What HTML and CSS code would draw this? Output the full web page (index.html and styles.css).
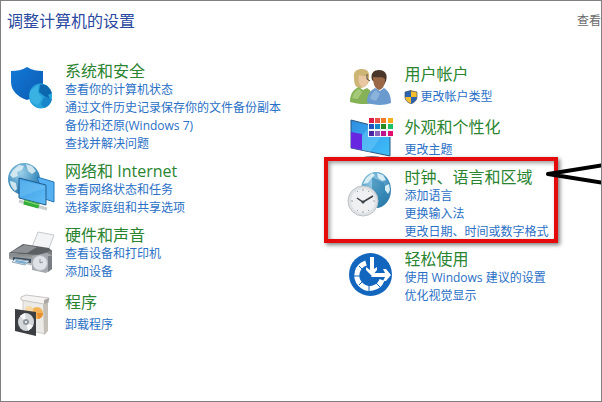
FILE: index.html
```html
<!DOCTYPE html>
<html lang="zh-CN">
<head>
    <meta charset="UTF-8">
    <meta name="viewport" content="width=device-width, initial-scale=1.0">
    <title>控制面板</title>
    <link rel="stylesheet" href="styles.css">
</head>
<body>
    <div class="window">
        <header class="top-bar">
            <h1>调整计算机的设置</h1>
            <span class="view-by">查看</span>
        </header>

        <main class="categories">
            <!-- Left column -->
            <div class="column">
                <section class="category">
                    <svg class="icon" viewBox="0 0 48 44" aria-hidden="true">
                        <defs>
                            <linearGradient id="shieldFill" x1="0" y1="0" x2="1" y2="1">
                                <stop offset="0" stop-color="#1379d6"/>
                                <stop offset="1" stop-color="#0a5bb2"/>
                            </linearGradient>
                        </defs>
                        <path fill="url(#shieldFill)" d="M4 10C10 10 15 9 20 6C25 9 30 10 36 10V21C36 30 29 36 20 39C11 36 4 30 4 21Z"/>
                        <ellipse cx="33.500" cy="35" rx="11.500" ry="12.500" fill="#27a3dc"/>
                        <path fill="#0b67ae" d="M33 24C39 22 43 27 45 32L41 34L43 38L37 35L32 31Z"/>
                        <path fill="#1685c9" d="M37 36L45 38C44 43 41 46 37 47L34 43Z"/>
                        <path fill="#4dc0ea" d="M24 29L31 24L31 32L35 37L31 44C25 43 20 36 24 29Z" opacity=".5"/>
                    </svg>
                    <div class="info">
                        <h2><a href="#">系统和安全</a></h2>
                        <ul>
                            <li><a href="#">查看你的计算机状态</a></li>
                            <li><a href="#">通过文件历史记录保存你的文件备份副本</a></li>
                            <li><a href="#">备份和还原(Windows 7)</a></li>
                            <li><a href="#">查找并解决问题</a></li>
                        </ul>
                    </div>
                </section>

                <section class="category">
                    <svg class="icon" viewBox="0 0 48 44" aria-hidden="true">
                        <defs>
                            <radialGradient id="globeFill" cx=".4" cy=".3" r=".8">
                                <stop offset="0" stop-color="#9dd0ea"/>
                                <stop offset=".6" stop-color="#4795c2"/>
                                <stop offset="1" stop-color="#2c6f9f"/>
                            </radialGradient>
                            <linearGradient id="screenFill" x1="0" y1="0" x2="1" y2="1">
                                <stop offset="0" stop-color="#3c9ee6"/>
                                <stop offset="1" stop-color="#62bcf6"/>
                            </linearGradient>
                        </defs>
                        <circle cx="17" cy="18" r="16" fill="url(#globeFill)"/>
                        <path fill="#dcecf2" d="M6 9L12 4L17 5L15 9L10 11L11 15L6 17L3 14ZM19 3L25 5L29 10L25 13L21 10ZM4 20L9 22L10 28L8 30C5 27 3 24 3 20Z" opacity=".9"/>
                        <path fill="#55b0f2" stroke="#2577b8" d="M30 16L47 21V41L38 38Z"/>
                        <path fill="url(#screenFill)" stroke="#205e91" d="M12 17L39 24V44L12 37Z"/>
                        <path fill="#8bd0fa" d="M13 19L38 25V27L13 36Z" opacity=".3"/>
                        <path stroke="#c9cfcf" stroke-width="3" d="M12 40L40 48"/>
                        <path stroke="#35ad3b" stroke-width="5" d="M17 41L32 45"/>
                        <path stroke="#8ddd80" stroke-width="1" d="M18 40L32 44"/>
                    </svg>
                    <div class="info">
                        <h2><a href="#">网络和 Internet</a></h2>
                        <ul>
                            <li><a href="#">查看网络状态和任务</a></li>
                            <li><a href="#">选择家庭组和共享选项</a></li>
                        </ul>
                    </div>
                </section>

                <section class="category">
                    <svg class="icon" viewBox="0 0 48 44" aria-hidden="true">
                        <defs>
                            <linearGradient id="printerFill" x1="0" y1="0" x2="0" y2="1">
                                <stop offset="0" stop-color="#6e7174"/>
                                <stop offset=".5" stop-color="#999da0"/>
                                <stop offset="1" stop-color="#c3c7ca"/>
                            </linearGradient>
                        </defs>
                        <path fill="#f3f4f5" stroke="#c6c9cc" d="M31 7L47 10L41 26L25 22Z"/>
                        <path fill="#5d6063" d="M16 19L42 23L45 26L32 31L2 28Z"/>
                        <path fill="url(#printerFill)" d="M2 28L32 30L45 25V36L26 41L2 34Z"/>
                        <path fill="#8e9296" d="M4 27L17 20L30 22L20 28Z"/>
                        <path fill="#3d4f60" d="M6 32L24 34V38L6 35Z"/>
                        <path fill="#e4edf4" stroke="#92a8ba" d="M8 34L22 36L18 40L5 37Z"/>
                        <path fill="#77a9cc" d="M9 35L20 37L18 39L8 37Z"/>
                        <path fill="#a3a9ae" d="M25 31L40 28L45 31V44L39 48L25 45Z"/>
                        <path fill="#787e84" d="M41 31L45 31V44L41 47Z"/>
                        <circle cx="33" cy="38" r="7.500" fill="#dfe3e7" stroke="#b4babf"/>
                        <path fill="none" stroke="#8a929a" d="M33 34V38L36 37"/>
                    </svg>
                    <div class="info">
                        <h2><a href="#">硬件和声音</a></h2>
                        <ul>
                            <li><a href="#">查看设备和打印机</a></li>
                            <li><a href="#">添加设备</a></li>
                        </ul>
                    </div>
                </section>

                <section class="category single">
                    <svg class="icon" viewBox="0 0 48 44" aria-hidden="true">
                        <path fill="#eceae6" stroke="#cfccc6" d="M16 10L38 13V45L16 40Z"/>
                        <path fill="#c4bfb7" d="M36 13L41 12V42L37 46Z"/>
                        <path fill="#f5f4f2" stroke="#c8c5c1" d="M14 8L19 6L42 9L41 14L37 15L14 11Z"/>
                        <path fill="#aaa6a2" d="M37 11L42 9L41 14L37 15Z"/>
                        <circle cx="30" cy="24" r="6" fill="#f2b356"/>
                        <circle cx="22" cy="21" r="4" fill="#f6d9a4"/>
                        <path fill="#e98f2d" d="M30 24L36 24A6 6 0 0 1 31 30Z"/>
                        <path fill="#3b3f43" d="M8 20L29 23V47L8 42Z"/>
                        <ellipse cx="19" cy="33" rx="8" ry="9" fill="#d5d8da"/>
                        <path fill="#f8f9fa" d="M19 33L13 27L18 24ZM19 33L26 37L21 42Z"/>
                        <circle cx="19" cy="33" r="3" fill="#8f979d"/>
                        <circle cx="19" cy="33" r="1" fill="#ffffff"/>
                    </svg>
                    <div class="info">
                        <h2><a href="#">程序</a></h2>
                        <ul>
                            <li><a href="#">卸载程序</a></li>
                        </ul>
                    </div>
                </section>
            </div>

            <!-- Right column -->
            <div class="column">
                <section class="category single">
                    <svg class="icon" viewBox="0 0 48 44" aria-hidden="true">
                        <path fill="#cdb576" d="M8 17C7 10 11 8 16 8C22 8 24 12 23 18C23 23 20 26 15 27C10 27 8 24 8 17Z"/>
                        <path fill="#e9c7a3" d="M13 14C17 16 20 15 22 15C23 21 21 25 17 26C13 25 12 20 13 14Z"/>
                        <path fill="#86b257" d="M4 41C4 32 8 28 13 26L17 29L21 27C25 29 27 34 27 42C20 44 11 43 4 41Z"/>
                        <path fill="#b3d287" d="M6 37C8 31 10 29 13 28L16 31L12 38Z" opacity=".7"/>
                        <path fill="#4a352b" d="M26 19C24 12 28 9 33 9C39 9 42 13 40 20L38 24L27 20Z"/>
                        <path fill="#9b6847" d="M27 16C32 17 36 15 39 18C39 24 37 28 33 29C29 28 27 23 27 16Z"/>
                        <path fill="#6b9bce" d="M21 42C21 33 24 30 29 27L34 30L38 27C43 30 45 35 45 42C37 45 28 44 21 42Z"/>
                        <path fill="#9fc1e5" d="M24 38C25 33 27 31 30 29L34 33L30 40Z" opacity=".6"/>
                        <path fill="none" stroke="#4a4640" d="M21 13V18L24 20"/>
                    </svg>
                    <div class="info">
                        <h2><a href="#">用户帐户</a></h2>
                        <ul>
                            <li>
                                <a class="with-shield" href="#"><svg class="uac" viewBox="0 0 14 14" aria-hidden="true">
                                    <path fill="#2b62b0" d="M7 0L1 2V7H7Z"/>
                                    <path fill="#f4bd2c" d="M7 0L13 2V7H7Z"/>
                                    <path fill="#f4bd2c" d="M1 7H7V14C3 12 1 10 1 7Z"/>
                                    <path fill="#2b62b0" d="M7 7H13C13 10 11 12 7 14Z"/>
                                    <path fill="none" stroke="#3c5270" d="M7 1L13 2V7C13 10 11 12 7 14C3 12 1 10 1 7V2Z" opacity=".7"/>
                                </svg>更改帐户类型</a>
                            </li>
                        </ul>
                    </div>
                </section>

                <section class="category single">
                    <svg class="icon" viewBox="0 0 48 44" aria-hidden="true">
                        <defs>
                            <linearGradient id="desktopFill" x1="0" y1="0" x2="1" y2="1">
                                <stop offset="0" stop-color="#2f8de0"/>
                                <stop offset="1" stop-color="#3fc0fb"/>
                            </linearGradient>
                        </defs>
                        <ellipse cx="26" cy="44" rx="9" ry="2" fill="#75797d"/>
                        <path fill="url(#desktopFill)" stroke="#2b567f" d="M5 6L44 16V42L5 34Z"/>
                        <path fill="#7ad2fc" d="M6 34L24 12L40 16L24 38Z" opacity=".4"/>
                        <path fill="#6926e0" d="M5 18L16 20V36L5 34Z"/>
                        <path fill="#ffffff" d="M22 3H48V23H22Z" opacity=".9"/>
                        <path fill="#dd1c45" d="M23 4H28V9H23Z"/>
                        <path fill="#ea5146" d="M29 4H34V9H29Z"/>
                        <path fill="#ee7c25" d="M35 4H40V9H35Z"/>
                        <path fill="#f5ad18" d="M42 4H47V9H42Z"/>
                        <path fill="#1d54bd" d="M23 10H28V15H23Z"/>
                        <path fill="#1687c5" d="M29 10H34V15H29Z"/>
                        <path fill="#278a22" d="M35 10H40V15H35Z"/>
                        <path fill="#1bc064" d="M42 10H47V15H42Z"/>
                        <path fill="#4d279f" d="M23 17H28V22H23Z"/>
                        <path fill="#8d64ba" d="M29 17H34V22H29Z"/>
                        <path fill="#bd148b" d="M35 17H40V22H35Z"/>
                        <path fill="#e30d70" d="M42 17H47V22H42Z"/>
                    </svg>
                    <div class="info">
                        <h2><a href="#">外观和个性化</a></h2>
                        <ul>
                            <li><a href="#">更改主题</a></li>
                        </ul>
                    </div>
                </section>

                <section class="category marked">
                    <svg class="icon" viewBox="0 0 48 44" aria-hidden="true">
                        <ellipse cx="30" cy="23" rx="15" ry="18" fill="url(#globeFill)"/>
                        <path fill="#287fae" d="M26 10L38 16L43 30C40 37 36 40 30 41L26 24Z" opacity=".6"/>
                        <path fill="#d8edf4" d="M20 11L26 6L29 8L25 12L22 16L17 17ZM31 6L37 8L40 13L36 14L32 11ZM39 19L43 17L44 23L42 27L39 23Z"/>
                        <circle cx="17" cy="34" r="15" fill="#dfe2e5" stroke="#bcc1c6"/>
                        <circle cx="17" cy="34" r="12" fill="#eff0f2"/>
                        <path stroke="#a0a5aa" d="M17 22V24M17 44V46M5 34H7M27 34H29M11 24L12 25M23 24L22 25M11 44L12 43M23 44L22 43"/>
                        <path fill="none" stroke="#3c4145" stroke-width="1.500" d="M11 31L17 35L27 29"/>
                        <circle cx="17" cy="35" r="1.500" fill="#3c4145"/>
                    </svg>
                    <div class="info">
                        <h2><a href="#">时钟、语言和区域</a></h2>
                        <ul>
                            <li><a href="#">添加语言</a></li>
                            <li><a href="#">更换输入法</a></li>
                            <li><a href="#">更改日期、时间或数字格式</a></li>
                        </ul>
                    </div>
                    <!-- Hand-drawn pointer -->
                    <svg class="pointer" viewBox="0 0 60 30" aria-hidden="true">
                        <path d="M60 5L4 14L60 23"/>
                    </svg>
                </section>

                <section class="category">
                    <svg class="icon" viewBox="0 0 48 44" aria-hidden="true">
                        <circle cx="24.500" cy="25.500" r="21.500" fill="#1266bd"/>
                        <path fill="none" stroke="#ffffff" stroke-width="5" d="M20 14A13 13 0 1 0 36 31"/>
                        <path stroke="#1266bd" d="M23 36V43M7 27H14M13 36L16 33M30 34L34 38M13 17L16 20"/>
                        <path fill="none" stroke="#1266bd" stroke-width="7" d="M26 9V24"/>
                        <path fill="#ffffff" d="M24 8H28V20L31 18V21L26 27L20 21V18L24 21Z"/>
                        <path fill="#ffffff" d="M28 24H39L37 20H40L45 26L40 32H37L39 28H25Z"/>
                    </svg>
                    <div class="info">
                        <h2><a href="#">轻松使用</a></h2>
                        <ul>
                            <li><a href="#">使用 Windows 建议的设置</a></li>
                            <li><a href="#">优化视觉显示</a></li>
                        </ul>
                    </div>
                </section>
            </div>
        </main>
    </div>
</body>
</html>
```

FILE: styles.css
```css
* {
    box-sizing: border-box;
}

body {
    margin: 0;
    background-color: white;
    font-family: "Open Sans", "Noto Sans CJK SC", sans-serif;
    font-size: 12px;
    line-height: 18px;
}

h1, h2, ul {
    margin: 0;
    padding: 0;
    font-weight: normal;
}

ul {
    list-style: none;
}

a {
    color: #2a70c6;
    text-decoration: none;
}

a:hover {
    text-decoration: underline;
}

.window {
    min-height: 100vh;
    border: 1px solid #808080;
    overflow: hidden;
}

.top-bar {
    display: flex;
    justify-content: space-between;
    align-items: center;
    padding: 10px 0 0 6px;
}

.top-bar h1 {
    color: #2a48a0;
    font-size: 16px;
    line-height: 20px;
}

.view-by {
    color: #6b6b6b;
}

.categories {
    display: grid;
    grid-template-columns: 4fr 3fr;
    padding: 30px 0 8px 6px;
}

.column {
    display: flex;
    flex-direction: column;
    gap: 8px;
}

.category {
    display: flex;
    align-items: flex-start;
    gap: 10px;
    width: fit-content;
    white-space: nowrap;
}

.icon {
    flex: none;
    width: 48px;
    height: 44px;
    overflow: visible;
}

.info h2 {
    font-size: 16px;
    line-height: 20px;
}

.info h2 a {
    color: #2a8430;
}

/* categories with one link sit a little looser */
.single .info {
    padding-top: 3px;
}

.single ul {
    margin-top: 4px;
}

.with-shield {
    display: flex;
    align-items: center;
    gap: 2px;
}

.uac {
    width: 14px;
    height: 14px;
}

/* red frame drawn over the category */
.marked {
    position: relative;
}

.marked::after {
    content: "";
    position: absolute;
    inset: -10px -10px -2px -22px;
    border: 4px solid #e30b0b;
    box-shadow: 2px 2px 4px rgba(0,0,0,0.5), inset 2px 2px 4px rgba(0,0,0,0.4);
    pointer-events: none;
}

.pointer {
    position: absolute;
    top: -7px;
    left: 98%;
    z-index: 1;
    width: 60px;
    height: 30px;
    pointer-events: none;
}

.pointer path {
    fill: none;
    stroke: #000000;
    stroke-width: 4;
    stroke-linecap: round;
    stroke-linejoin: round;
}
```
